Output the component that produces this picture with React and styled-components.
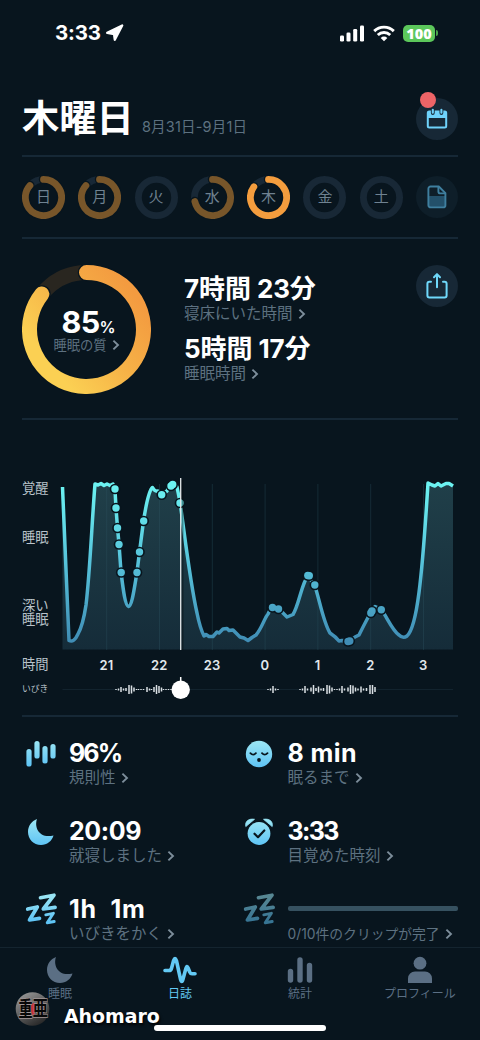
import React from 'react';
import styled, { createGlobalStyle } from 'styled-components';

const BG = '#08151e';
const RULE = '#162836';
const MUTED = '#5d7180';

const GlobalStyle = createGlobalStyle`
  * { box-sizing: border-box; }
  html, body { margin: 0; padding: 0; background: ${BG}; }
  body { font-family: Inter, "Noto Sans CJK JP", sans-serif; color: #fff; }
  svg { display: block; flex: none; }
`;

const Screen = styled.div`
  width: 480px;
  height: 1040px;
  overflow: hidden;
  position: relative;
  display: flex;
  flex-direction: column;
  background: ${BG};
`;

const StatusBar = styled.div`
  height: 66px;
  padding: 0 42px 0 55px;
  display: flex;
  align-items: center;
  justify-content: space-between;
`;

const Clock = styled.div`
  display: flex;
  align-items: center;
  gap: 4px;
  font-size: 20.5px;
  font-weight: 700;
  letter-spacing: -0.2px;
  line-height: 24px;
`;

const Indicators = styled.div`
  display: flex;
  align-items: center;
  gap: 8px;
`;

const Battery = styled.div`
  display: flex;
  align-items: center;
  gap: 1px;
`;

const BatteryBody = styled.span`
  width: 32px;
  height: 17px;
  border-radius: 5px;
  background: #5cc75b;
  font: 800 14.5px/17px "Open Sans", sans-serif;
  text-align: center;
`;

const BatteryTip = styled.span`
  width: 2px;
  height: 6px;
  border-radius: 0 2px 2px 0;
  background: #4aa54b;
`;

const Section = styled.section`
  height: ${(p) => p.$height}px;
  margin: 0 22px;
  border-bottom: 2px solid ${RULE};
  display: flex;
`;

const Header = styled(Section)`
  padding-top: 26px;
  justify-content: space-between;
`;

const TitleGroup = styled.div`
  display: flex;
  align-items: baseline;
  gap: 8px;
  height: 54px;
`;

const Title = styled.h1`
  margin: 0;
  font-size: 37.3px;
  line-height: 53px;
  font-weight: 700;
`;

const DateRange = styled.span`
  color: ${MUTED};
  font-size: 14.5px;
  font-weight: 400;
  letter-spacing: 0.2px;
`;

const RoundButton = styled.div`
  width: 42px;
  height: 42px;
  border-radius: 50%;
  background: ${(p) => (p.$dim ? '#0e1e29' : '#172836')};
  display: flex;
  align-items: center;
  justify-content: center;
  position: relative;
  margin-top: ${(p) => p.$top || 0}px;
`;

const Badge = styled.span`
  position: absolute;
  left: 4px;
  top: -6px;
  width: 16px;
  height: 16px;
  border-radius: 50%;
  background: #ee6467;
`;

const Week = styled(Section)`
  justify-content: space-between;
  align-items: center;
`;

const Day = styled.div`
  width: 43px;
  height: 43px;
  display: grid;
  place-items: center;
  > * { grid-area: 1 / 1; }
`;

const DayName = styled.span`
  font-size: 15px;
  line-height: 20px;
  color: #6f8291;
`;

const Summary = styled(Section)`
  padding-top: 26px;
`;

const Gauge = styled.div`
  width: 129px;
  height: 129px;
  display: grid;
  place-items: center;
  > * { grid-area: 1 / 1; }
`;

const GaugeText = styled.div`
  display: flex;
  flex-direction: column;
  align-items: center;
  padding-top: 6px;
`;

const Quality = styled.div`
  font-size: 30.5px;
  line-height: 22px;
  height: 25px;
  font-weight: 700;
  letter-spacing: -0.6px;
  padding-left: 4px;
  small { font-size: 16px; font-weight: 600; letter-spacing: 0; }
`;

const Durations = styled.div`
  flex: 1;
  margin-left: 33px;
  padding-top: 9px;
`;

const Duration = styled.div`
  font-size: 26px;
  line-height: 29px;
  height: 29px;
  font-weight: 700;
  letter-spacing: -0.1px;
  white-space: pre;
`;

const Label = styled.div`
  display: flex;
  align-items: center;
  gap: 5px;
  color: ${MUTED};
  font-size: ${(p) => p.$size || 15.5}px;
  line-height: ${(p) => p.$height || 22}px;
  height: ${(p) => p.$height || 22}px;
  margin-bottom: ${(p) => p.$bottom || 0}px;
  white-space: nowrap;
`;

const Journal = styled(Section)`
  height: 297px;
  padding-top: 50px;
`;

const AxisLabels = styled.div`
  width: 38px;
  padding-top: 11px;
  display: flex;
  flex-direction: column;
  font-size: 13.3px;
  line-height: 14px;
  color: #b9c3ca;
`;

const AxisLabel = styled.span`
  height: ${(p) => p.$height}px;
  font-size: ${(p) => (p.$small ? 8.8 : 13.3)}px;
`;

const Plot = styled.div`
  flex: 1;
`;

const Hours = styled.div`
  display: grid;
  grid-template-columns: repeat(7, 52.8px);
  margin-left: 20px;
  height: 25px;
  line-height: 26px;
  font-size: 13px;
  font-weight: 600;
  text-align: center;
  color: #e2e8ec;
`;

const Stats = styled.section`
  flex: 1;
  padding: 23px 22px 0;
  display: grid;
  grid-template-columns: 218.5px 1fr;
  grid-template-rows: repeat(3, 78px);
  overflow: hidden;
`;

const Stat = styled.div`
  display: flex;
`;

const StatIcon = styled.div`
  width: 47px;
  height: 27px;
  display: flex;
  align-items: center;
  justify-content: center;
  padding-right: 10px;
  opacity: ${(p) => (p.$dim ? 0.55 : 1)};
`;

const StatBody = styled.div`
  flex: 1;
`;

const Value = styled.div`
  font-size: 25px;
  line-height: 27px;
  height: 27px;
  font-weight: 700;
  letter-spacing: ${(p) => p.$track || 0}px;
  white-space: pre;
`;

const Track = styled.div`
  height: 25px;
  margin-bottom: 2px;
  display: flex;
  align-items: center;
  &::before {
    content: '';
    width: 170px;
    height: 5px;
    border-radius: 2px;
    background: #365160;
  }
`;

const TabBar = styled.nav`
  height: 93px;
  border-top: 1px solid #14242f;
  display: grid;
  grid-template-columns: repeat(4, 1fr);
`;

const Tab = styled.div`
  display: flex;
  flex-direction: column;
  align-items: center;
  padding-top: 8px;
  gap: 1px;
  font-size: 12px;
  line-height: 18px;
  color: ${(p) => (p.$active ? '#63c9f4' : '#5b6f84')};
`;

const HomeIndicator = styled.div`
  position: absolute;
  left: 154px;
  top: 1025px;
  width: 172px;
  height: 6px;
  border-radius: 3px;
  background: #fff;
`;

const Signature = styled.div`
  position: absolute;
  left: 15px;
  top: 991px;
  display: flex;
  gap: 13px;
  font: 700 18.9px/50px "DejaVu Sans", sans-serif;
  text-shadow: 1px 2px 3px #000;
`;

const Chevron = () => (
  <svg width="8" height="12" viewBox="0 0 8 12" fill="none" stroke="#7d8e9b" strokeWidth="1.9">
    <path d="M1.4 1.6 6 6l-4.6 4.400" />
  </svg>
);

const IconGradient = () => (
  <svg width="0" height="0" style={{ position: 'absolute' }}>
    <defs>
      <linearGradient id="ice" x1="0" y1="0" x2="0" y2="30" gradientUnits="userSpaceOnUse">
        <stop offset="0.1" stopColor="#98e4f4" />
        <stop offset="0.9" stopColor="#5fc4f5" />
      </linearGradient>
      <linearGradient id="gold" x1="0.85" y1="0.1" x2="0.1" y2="0.7">
        <stop offset="0" stopColor="#f39b40" />
        <stop offset="0.5" stopColor="#f6b247" />
        <stop offset="1" stopColor="#fbd053" />
      </linearGradient>
    </defs>
  </svg>
);

const Ring = ({ size, width, value, color, track }) => {
  const r = (size - width) / 2;
  const c = size / 2;
  const a = value * Math.PI * 2;
  const arc = `M${c} ${c - r}A${r} ${r} 0 ${value > 0.5 ? 1 : 0} 1 ${c + r * Math.sin(a)} ${c - r * Math.cos(a)}`;
  return (
    <svg width={size} height={size} fill="none" strokeLinecap="round">
      <circle cx={c} cy={c} r={r} stroke={track} strokeWidth={width} />
      {value > 0 && <path d={arc} stroke={BG} strokeWidth={width + 2.6} />}
      {value > 0 && <path d={arc} stroke={color} strokeWidth={width} />}
    </svg>
  );
};

const CalendarIcon = () => (
  <svg width="22" height="22" viewBox="0 0 22 22">
    <rect x="1.800" y="3.600" width="18.400" height="15.800" rx="1.500" fill="none" stroke="#6fd2fa" strokeWidth="2" />
    <path d="M1.500 3.600h19v6.400h-19z" fill="#6fd2fa" />
    <path d="M6.800 1.500v3.500M15.400 1.500v3.500" stroke="#172836" strokeWidth="3.800" strokeLinecap="round" />
    <path d="M6.800 1.700v3.100M15.400 1.700v3.100" stroke="#6fd2fa" strokeWidth="2.100" strokeLinecap="round" />
  </svg>
);

const NoteIcon = () => (
  <svg width="20" height="24" viewBox="0 0 20 24" fill="none" stroke="#3f7f9f" strokeWidth="1.9" strokeLinejoin="round">
    <path d="M1.8 11h16.4v11H1.8z" fill="#23506a" stroke="none" />
    <path d="M3.6 1.5h8.2l6.6 6.6v12.1a2.2 2.2 0 0 1-2.2 2.2H3.6a2.2 2.2 0 0 1-2.2-2.2V3.7a2.2 2.2 0 0 1 2.2-2.2Z" />
    <path d="M11.4 1.8v4.6a2 2 0 0 0 2 2h4.8" />
  </svg>
);

const ShareIcon = () => (
  <svg width="22" height="28" viewBox="0 0 22 28" fill="none" stroke="#6fd8fa" strokeWidth="2" strokeLinecap="round" strokeLinejoin="round">
    <path d="M5 9.8H3.4a2 2 0 0 0-2 2v11.6a2 2 0 0 0 2 2h15.2a2 2 0 0 0 2-2V11.8a2 2 0 0 0-2-2H17M11 15.2V2.6M8 5.2l3-3.1 3 3.1" />
  </svg>
);

const BarsIcon = () => (
  <svg width="34" height="30" viewBox="0 0 34 30" stroke="url(#ice)" strokeWidth="5.200" strokeLinecap="round">
    <path d="M5 12.500v12.500M13 4.500v12.500M21 9.500v12.500M29 7.500v9.500" />
  </svg>
);

const MoonIcon = ({ fill = 'url(#ice)' }) => (
  <svg width="28" height="28" viewBox="0 0 28 28">
    <path d="M10 1C7 9 12 21 26.500 17.500C25 23 20 27 14 27C6.500 27 1 21 1 14C1 8 4.500 3 10 1Z" fill={fill} />
  </svg>
);

const FaceIcon = () => (
  <svg width="28" height="28" viewBox="0 0 28 28">
    <circle cx="14" cy="14" r="13.2" fill="url(#ice)" />
    <path d="M5.400 13.200q2.700 3 5.500 0M17 13.200q2.700 3 5.500 0" fill="none" stroke={BG} strokeWidth="1.800" strokeLinecap="round" />
    <circle cx="14" cy="20" r="1.900" fill={BG} />
  </svg>
);

const AlarmIcon = () => (
  <svg width="28" height="28" viewBox="0 0 28 28">
    <path d="M.8 8.600C-.3 3.500 3.500.3 9.500 1.300zM27.200 8.600C28.300 3.500 24.500.3 18.500 1.300z" fill="url(#ice)" stroke="url(#ice)" strokeWidth=".8" strokeLinejoin="round" />
    <circle cx="14" cy="15.500" r="12.600" fill={BG} />
    <circle cx="14" cy="15.500" r="11.400" fill="url(#ice)" />
    <path d="m9.500 15.700 3.500 3.500 6.300-6.700" fill="none" stroke={BG} strokeWidth="2.200" strokeLinecap="round" strokeLinejoin="round" />
  </svg>
);

const SnoreIcon = () => (
  <svg width="34" height="34" viewBox="-1 -1 34 34" fill="none" stroke="url(#ice)" strokeWidth="3.700" strokeLinecap="round" strokeLinejoin="round">
    <path d="M2.700 15 12.300 13 4.500 26l10-1.600M15.500 3.700l13.500-2.500L18.300 15l11.800-1.700" />
    <path strokeWidth="2.900" d="m20.800 20.800 7.600-1.500-6.200 9.500 7-1.300" />
  </svg>
);

const curve =
  'M62.500 487L69 640.500Q74 643 78 634Q83 625 86 605C90 572 92 520 95 484L98 485L101 483.500L104 485.500L107 484L110 485.500L113 484' +
  'L115 490L116 508L117.500 528L119 544L121 572C123 588 125 606 128.500 606.500C132 606 134 590 137 572L139.500 552L143.500 521' +
  'C146 505 149 490 152.500 487.500Q155 492 158 491L162 494.500L167 491L170 485L173 484L177 487L180 502' +
  'C184 530 190 582 197 613C199 623 202 632 204 636L206 634.500L209 636.500L213 636.500L217 632L219 633L223 629L227 628.500L229 630.500L233 630L237 634L240 637' +
  'L244 638L248 640.500L252 637.500L256 635C262 628 264 619 268 614Q271 607 274 607.500L278 609L282 612L287 617L293 614.500C299 605 302 582 308 576' +
  'L314.500 585C319 597 323 622 330 633Q336 637 339 641L342 640.500L350 641L355 637L359 635Q366 621 371 612L375 606.500L381 609C387 617 392 630 399 635' +
  'Q403 639 407 636C417 627 422 580 428 483L432 485L435 486L438 483.500L441 486L446 483.500L449 483.500L453 486';

const events = [
  [115, 489], [116, 508], [117.5, 528], [119, 544.5], [121.2, 572.5], [137, 572.5], [139.5, 552],
  [143.7, 521], [161.7, 494.8], [171, 486], [172.700, 484.500], [180, 503], [272.500, 607.500], [278.500, 609],
  [307.800, 575.500], [309.300, 575.700], [314.800, 585], [348, 641.500], [349.800, 641], [370.800, 613], [372, 611], [381.300, 609.700],
];

const hours = ['21', '22', '23', '0', '1', '2', '3'];

const SleepChart = () => (
  <svg width="396" height="182" viewBox="60 470 396 182" fill="none">
    <defs>
      <linearGradient id="depth" x1="0" y1="484" x2="0" y2="642" gradientUnits="userSpaceOnUse">
        <stop offset="0" stopColor="#6cf3f2" />
        <stop offset="0.5" stopColor="#56c2da" />
        <stop offset="1" stopColor="#408db5" />
      </linearGradient>
      <linearGradient id="area" x1="0" y1="484" x2="0" y2="650" gradientUnits="userSpaceOnUse">
        <stop offset="0" stopColor="#203f49" />
        <stop offset="1" stopColor="#152c39" />
      </linearGradient>
    </defs>
    <path d={`${curve}V649.500H62.500Z`} fill="url(#area)" />
    {hours.map((h, i) => (
      <path key={h} d={`M${106.7 + i * 52.8} 484V650`} stroke="#2c5360" strokeOpacity=".36" />
    ))}
    <path d={curve} stroke="url(#depth)" strokeWidth="3.500" strokeLinejoin="round" />
    {events.map(([x, y]) => <circle key={x} cx={x} cy={y} r="5.300" fill={BG} />)}
    {events.map(([x, y]) => <circle key={x} cx={x} cy={y} r="3.700" fill="url(#depth)" />)}
    <path d="M182.500 480V650" stroke="#04090d" strokeWidth="2" strokeOpacity=".4" />
    <path d="M180.700 478V650" stroke="#e4e8ea" strokeWidth="1.300" />
  </svg>
);

const snores = [
  [116, 1], [118.5, 2], [121, 5], [123.5, 2], [126, 3], [129, 9], [131.500, 8], [134, 4], [136.500, 1], [138.500, 1], [141, 1], [143.500, 1],
  [147, 5], [149.500, 2], [151.500, 1], [154, 5], [156.500, 9], [159, 7], [161.500, 4], [163.500, 1], [166, 1], [168.500, 1], [171, 1],
  [268, 1], [270.500, 2], [273, 7], [275.500, 2], [278, 1],
  [300, 1], [302.500, 2], [305, 7], [307.500, 2], [311, 4], [313.500, 9], [316, 3], [318.500, 6], [321, 2], [323.500, 3], [327, 9], [329.500, 8], [332, 4],
  [334.500, 1], [337, 1], [339.500, 2], [342, 7], [344.500, 2], [348, 4], [350.500, 9], [353, 8], [355.500, 4], [358, 2], [361, 6], [363.500, 2],
  [366.500, 3], [370, 9], [372.500, 9], [375, 5],
];

const SnoreTrack = () => (
  <svg width="396" height="24" viewBox="60 677 396 24">
    <path d="M62.500 689.500H453" stroke="#12232e" />
    {snores.map(([x, h]) => (
      <path key={x} d={`M${x} ${689.500 - h / 2}v${h}`} stroke="#dbe1e5" strokeWidth="1.500" />
    ))}
    <path d="M180.700 677v6" stroke="#fff" strokeWidth="1.500" />
    <circle cx="180.700" cy="689.700" r="9.200" fill="#fff" />
  </svg>
);

const days = [
  ['日', 0.865, '#78562a'], ['月', 0.865, '#78562a'], ['火', 0], ['水', 0.715, '#78562a'],
  ['木', 0.85, '#f49d3e'], ['金', 0], ['土', 0],
];

const stats = [
  { icon: <BarsIcon />, value: '96%', label: '規則性', track: -1.9 },
  { icon: <FaceIcon />, value: '8 min', label: '眠るまで', track: 0.4 },
  { icon: <MoonIcon />, value: '20:09', label: '就寝しました', track: -0.4 },
  { icon: <AlarmIcon />, value: '3:33', label: '目覚めた時刻', track: -1.6 },
  { icon: <SnoreIcon />, value: '1h  1m', label: 'いびきをかく', track: 0.8 },
  { icon: <SnoreIcon />, label: '0/10件のクリップが完了', dim: true },
];

const tabs = [
  { label: '睡眠', icon: <MoonIcon fill="currentColor" /> },
  {
    label: '日誌',
    active: true,
    icon: (
      <svg width="34" height="28" viewBox="0 0 34 28" fill="none" stroke="currentColor" strokeWidth="3.600" strokeLinecap="round" strokeLinejoin="round">
        <path d="M2 14.500h4q2 0 2.600-2.500l2-7.500q1.400-4 2.800 0l4.200 19q1.200 4 2.300 0l3-11q1-3.500 2.200-.5l1.600 4q.8 1.800 2.300 1.800h3" />
      </svg>
    ),
  },
  {
    label: '統計',
    icon: (
      <svg width="28" height="28" viewBox="0 0 28 28" stroke="currentColor" strokeWidth="5.400" strokeLinecap="round">
        <path d="M4.500 15.500v8.500M14 4v20M23.500 9.500v14.500" />
      </svg>
    ),
  },
  {
    label: 'プロフィール',
    icon: (
      <svg width="28" height="28" viewBox="0 0 28 28" fill="currentColor">
        <circle cx="14" cy="7.200" r="6.400" />
        <path d="M2 27v-4.500a7 7 0 0 1 7-7h10a7 7 0 0 1 7 7V27z" />
      </svg>
    ),
  },
];

const Seal = () => (
  <svg width="36" height="36" viewBox="0 0 36 36">
    <defs>
      <linearGradient id="seal" x1="0.200" y1="0" x2="0.800" y2="1">
        <stop offset="0" stopColor="#989898" />
        <stop offset="0.500" stopColor="#5c5c5c" />
        <stop offset="1" stopColor="#202020" />
      </linearGradient>
    </defs>
    <circle cx="17.500" cy="18" r="16.800" fill="url(#seal)" />
    <path d="M11 12h9v12h-6z" fill="#c8323a" />
    <g fontFamily="Noto Sans CJK JP" fontWeight="700" fontSize="19" fill="#080808" stroke="#a09494" strokeWidth="1.200" style={{ paintOrder: 'stroke', textShadow: 'none' }}>
      <text transform="translate(3.500 25) scale(.74 1.100)">重</text>
      <text transform="translate(17.800 25) scale(.8 1.050)">亜</text>
    </g>
  </svg>
);

export default function App() {
  return (
    <Screen>
      <GlobalStyle />
      <IconGradient />
      <StatusBar>
        <Clock>
          3:33
          <svg width="19" height="18" viewBox="0 0 19 18">
            <path d="M17.200 1.500 9.800 15.800 9 10 2.200 8.900Z" fill="#fff" stroke="#fff" strokeWidth="2.300" strokeLinejoin="round" />
          </svg>
        </Clock>
        <Indicators>
          <svg width="26" height="17" viewBox="0 0 26 17" fill="#fff">
            <rect x="1" y="10.500" width="4" height="6" rx="1.300" />
            <rect x="7.500" y="7.500" width="4" height="9" rx="1.300" />
            <rect x="14.200" y="4" width="4" height="12.500" rx="1.300" />
            <rect x="21" y="0.500" width="4" height="16" rx="1.300" />
          </svg>
          <svg width="22" height="17" viewBox="0 0 22 17" fill="none" stroke="#fff" strokeWidth="2.900">
            <path d="M1.200 6.100a14 14 0 0 1 19.600 0M4.800 10a9 9 0 0 1 12.400 0" />
            <path d="M11 16.200 7.700 12.900a4.700 4.700 0 0 1 6.600 0Z" fill="#fff" stroke="none" />
          </svg>
          <Battery><BatteryBody>100</BatteryBody><BatteryTip /></Battery>
        </Indicators>
      </StatusBar>

      <Header $height={91}>
        <TitleGroup>
          <Title>木曜日</Title>
          <DateRange>8月31日-9月1日</DateRange>
        </TitleGroup>
        <RoundButton $top={6}><CalendarIcon /><Badge /></RoundButton>
      </Header>

      <Week $height={82}>
        {days.map(([name, value, color]) => (
          <Day key={name}>
            <Ring size={43} width={6.8} value={value} color={color} track="#182836" />
            <DayName>{name}</DayName>
          </Day>
        ))}
        <RoundButton $dim><NoteIcon /></RoundButton>
      </Week>

      <Summary $height={181}>
        <Gauge>
          <Ring size={129} width={15} value={0.857} color="url(#gold)" track="#292620" />
          <GaugeText>
            <Quality>85<small>%</small></Quality>
            <Label $size={13.3} $height={18}>睡眠の質<Chevron /></Label>
          </GaugeText>
        </Gauge>
        <Durations>
          <Duration>7時間 23分</Duration>
          <Label $bottom={9}>寝床にいた時間<Chevron /></Label>
          <Duration>5時間 17分</Duration>
          <Label>睡眠時間<Chevron /></Label>
        </Durations>
        <RoundButton><ShareIcon /></RoundButton>
      </Summary>

      <Journal>
        <AxisLabels>
          <AxisLabel $height={49}>覚醒</AxisLabel>
          <AxisLabel $height={68}>睡眠</AxisLabel>
          <AxisLabel $height={59}>深い<br />睡眠</AxisLabel>
          <AxisLabel $height={25}>時間</AxisLabel>
          <AxisLabel $height={14} $small>いびき</AxisLabel>
        </AxisLabels>
        <Plot>
          <SleepChart />
          <Hours>{hours.map((h) => <span key={h}>{h}</span>)}</Hours>
          <SnoreTrack />
        </Plot>
      </Journal>

      <Stats>
        {stats.map((s) => (
          <Stat key={s.label}>
            <StatIcon $dim={s.dim}>{s.icon}</StatIcon>
            <StatBody>
              {s.value ? <Value $track={s.track}>{s.value}</Value> : <Track />}
              <Label $size={s.dim ? 13.8 : 15.5}>{s.label}<Chevron /></Label>
            </StatBody>
          </Stat>
        ))}
      </Stats>

      <TabBar>
        {tabs.map((t) => (
          <Tab key={t.label} $active={t.active}>{t.icon}{t.label}</Tab>
        ))}
      </TabBar>
      <Signature><Seal />Ahomaro</Signature>
      <HomeIndicator />
    </Screen>
  );
}
